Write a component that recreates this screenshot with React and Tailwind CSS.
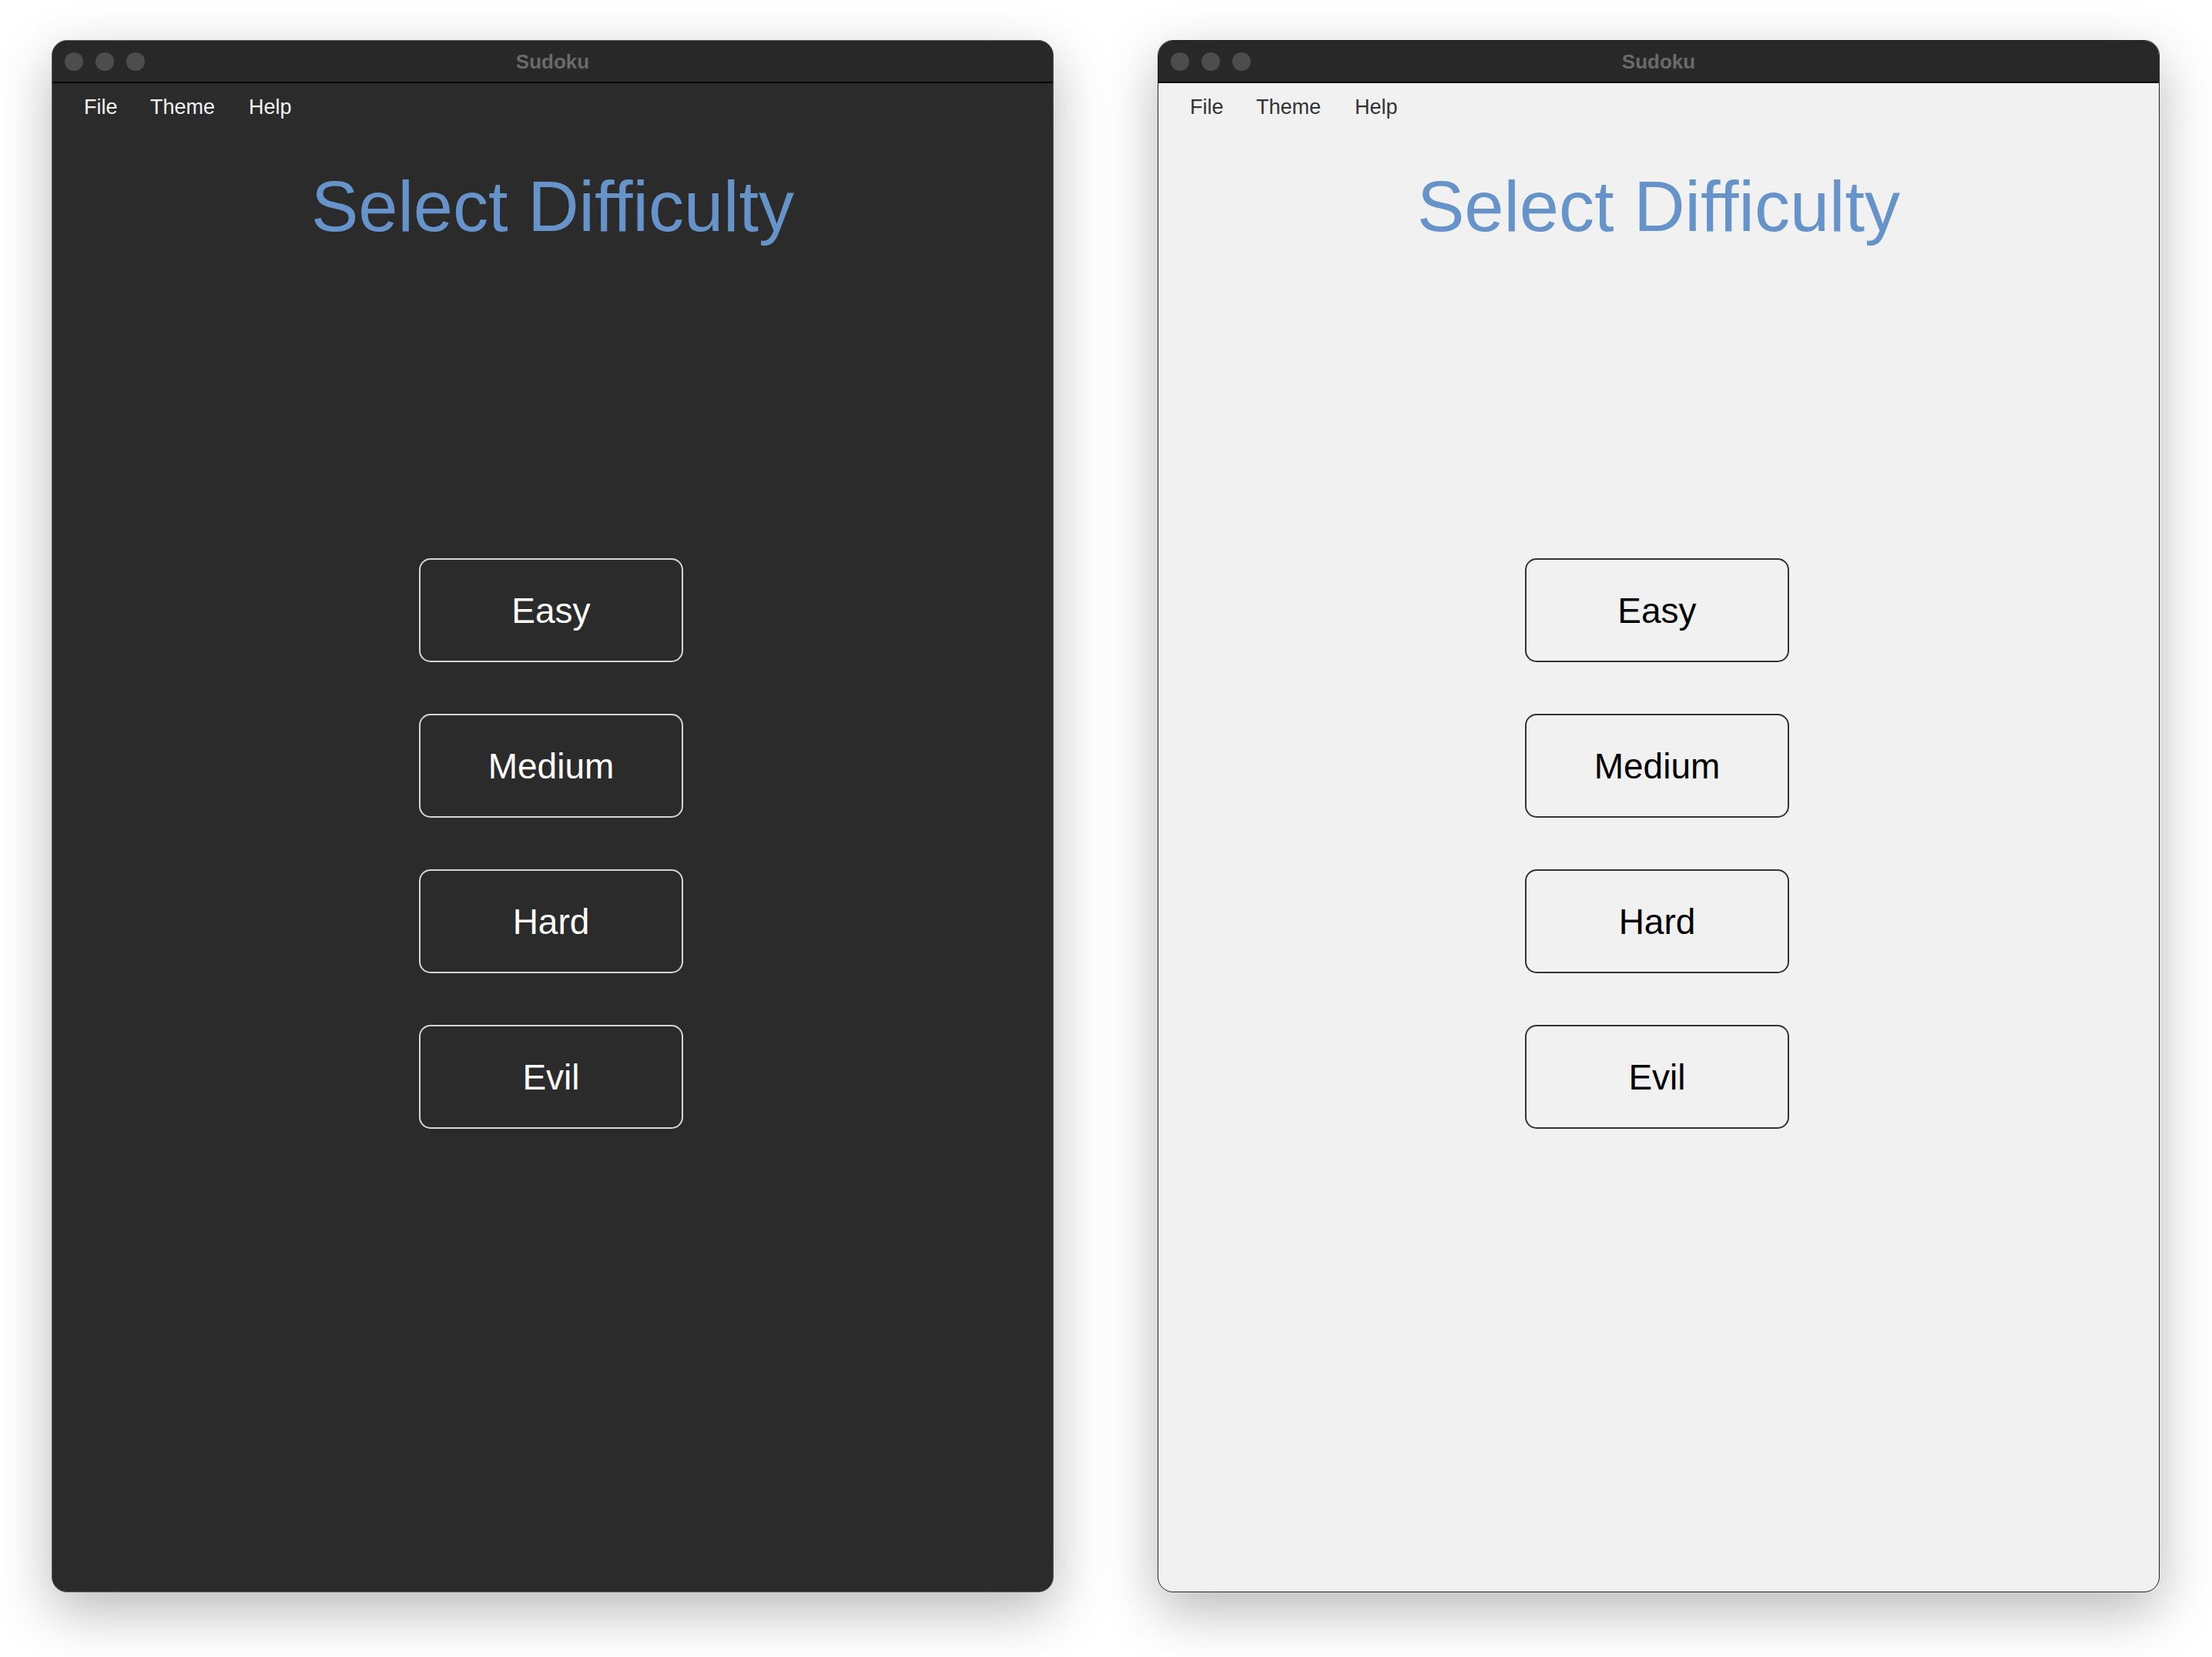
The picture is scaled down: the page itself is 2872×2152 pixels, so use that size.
const LEVELS = ["Easy", "Medium", "Hard", "Evil"];

const THEMES = {
  dark: {
    frame: "border-[#5a5a5a] bg-[#2b2b2b]",
    menu: "text-[#f2f2f2]",
    button: "border-[#d6d6d6] text-white",
  },
  light: {
    frame: "border-[#222222] bg-[#f1f1f1]",
    menu: "text-[#333333]",
    button: "border-[#333333] text-black",
  },
};

function Window({ theme }) {
  const t = THEMES[theme];
  return (
    <div
      className={`flex h-[2016px] w-[1301px] flex-col overflow-hidden rounded-[20px] border shadow-[0_24px_70px_rgba(0,0,0,0.28)] ${t.frame}`}
    >
      <div className="relative flex h-[55px] shrink-0 items-center border-b-2 border-black bg-[#282828] pl-[16px]">
        <div className="flex gap-[16px]">
          <span className="h-[24px] w-[24px] rounded-full bg-[#4d4d4d]" />
          <span className="h-[24px] w-[24px] rounded-full bg-[#4d4d4d]" />
          <span className="h-[24px] w-[24px] rounded-full bg-[#4d4d4d]" />
        </div>
        <div className="absolute inset-0 flex items-center justify-center text-[26px] font-bold leading-[26px] text-[#6a6a6a]">
          Sudoku
        </div>
      </div>

      <div className={`flex pl-[41px] pt-[18px] text-[27px] leading-[27px] ${t.menu}`}>
        <span className="w-[86px]">File</span>
        <span className="w-[128px]">Theme</span>
        <span>Help</span>
      </div>

      <h1 className="mt-[69px] text-center text-[92px] leading-[92px] text-[#6694ca]">
        Select Difficulty
      </h1>

      <div className="mt-[411px] flex flex-col items-center gap-[67px] pr-[4px]">
        {LEVELS.map((level) => (
          <button
            key={level}
            className={`flex h-[135px] w-[343px] items-center justify-center rounded-[15px] border-2 text-[46px] leading-[46px] ${t.button}`}
          >
            {level}
          </button>
        ))}
      </div>
    </div>
  );
}

export default function App() {
  return (
    <div
      className="flex h-[2152px] w-[2872px] gap-[135px] bg-white pl-[67px] pt-[52px]"
      style={{ fontFamily: '"Liberation Sans", Arial, sans-serif' }}
    >
      <Window theme="dark" />
      <Window theme="light" />
    </div>
  );
}
